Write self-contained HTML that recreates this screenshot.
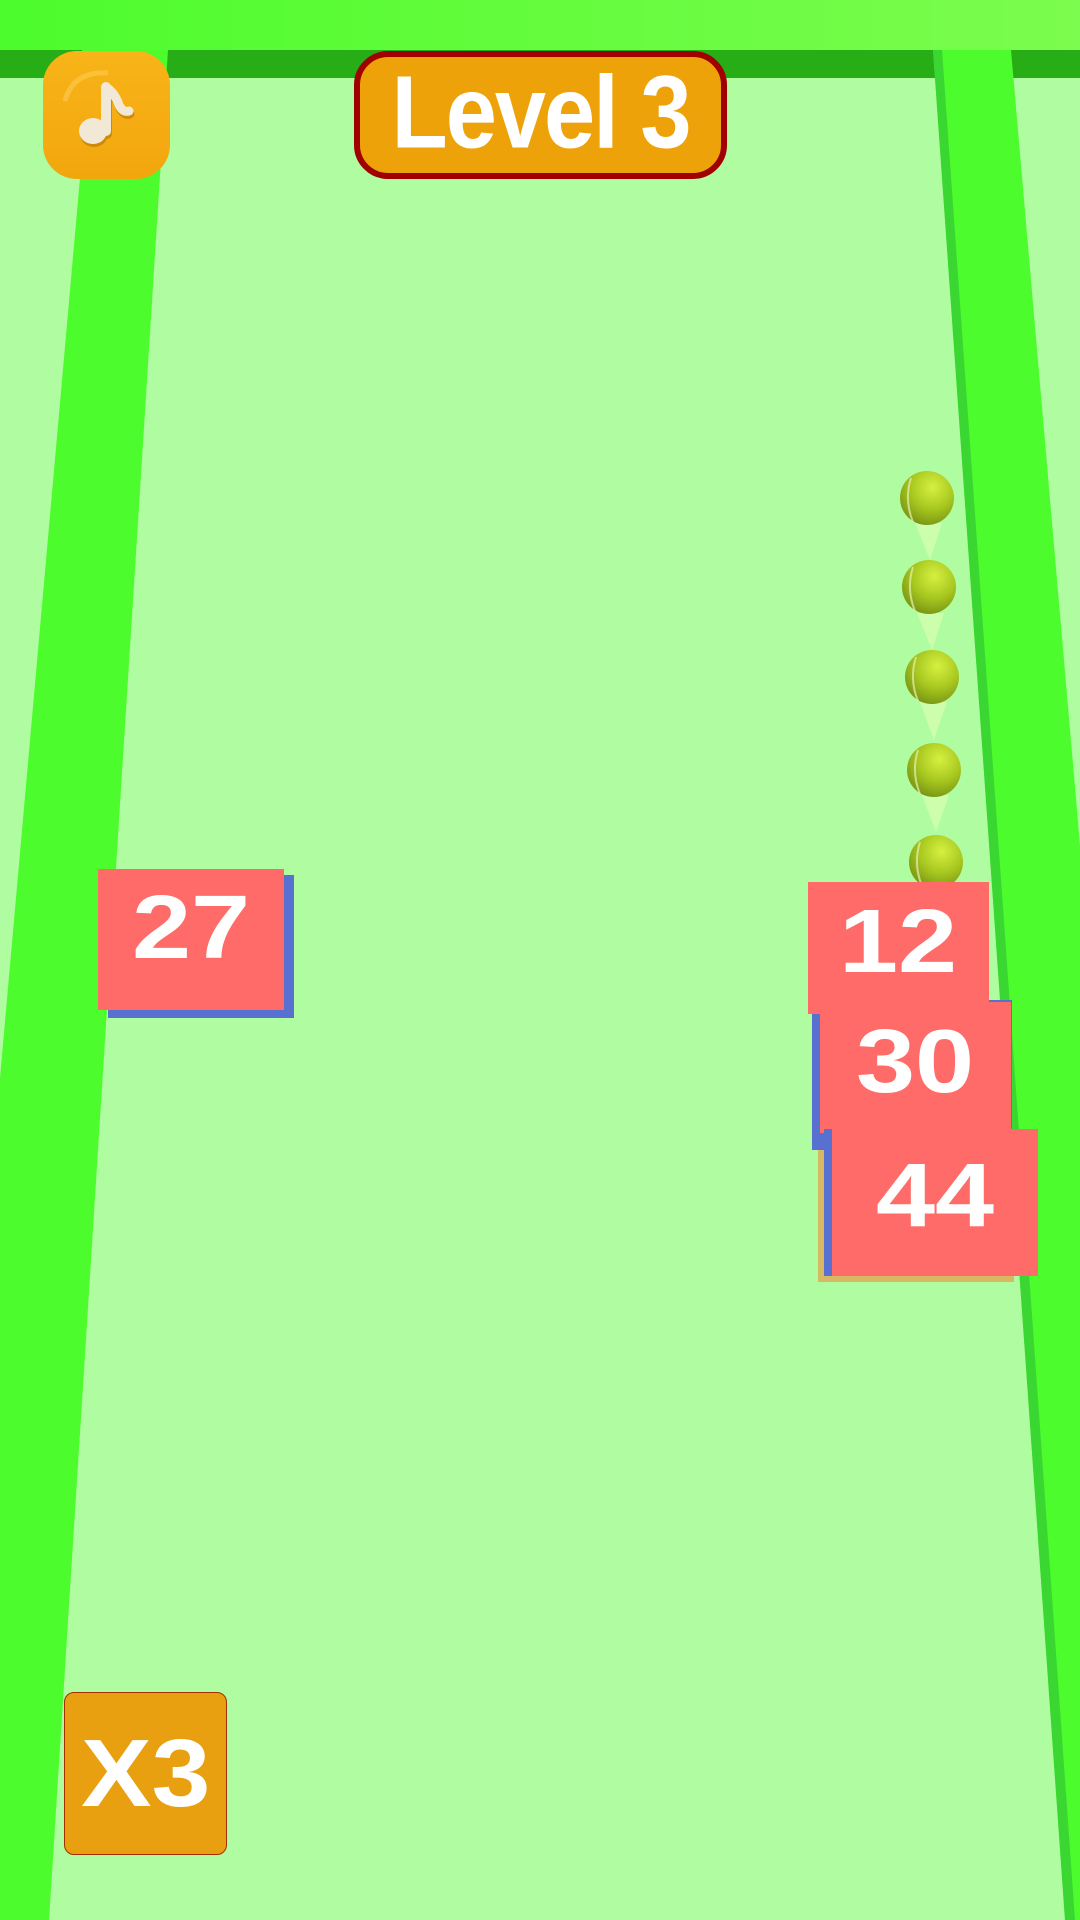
<!DOCTYPE html>
<html><head><meta charset="utf-8">
<style>
html,body{margin:0;padding:0;}
body{width:1080px;height:1920px;position:relative;overflow:hidden;background:#b0fca0;font-family:"Liberation Sans",sans-serif;font-weight:bold;}
.abs{position:absolute;}
.block{position:absolute;background:#ff6b68;color:#fff;font-weight:bold;text-align:center;}
.block span{display:inline-block;transform:scaleX(1.18);}
</style></head><body>
<svg class="abs" style="left:0;top:0" width="1080" height="1920" viewBox="0 0 1080 1920">
  <defs>
    <linearGradient id="top" x1="0" x2="1" y1="0" y2="0">
      <stop offset="0" stop-color="#4cfc2c"/><stop offset="1" stop-color="#7cfc4e"/>
    </linearGradient>
    <radialGradient id="ball" cx="0.6" cy="0.3" r="0.8">
      <stop offset="0" stop-color="#d6f040"/><stop offset="0.5" stop-color="#a8c820"/><stop offset="1" stop-color="#6e8a10"/>
    </radialGradient>
  </defs>
  <rect x="0" y="0" width="1080" height="50" fill="url(#top)"/>
  <rect x="0" y="50" width="1080" height="28" fill="#27ae16"/>
  <polygon points="82,50 168,50 49,1920 0,1920 0,1078 80,178" fill="#4cfc2c"/>
  <polygon points="933,50 1011,50 1080,845 1080,1920 1065,1920" fill="#4cfc2c"/>
  <polygon points="933,50 942,50 1075,1920 1065,1920" fill="#3ad632"/>
  <g fill="#d8ffb0" opacity="0.7">
    <polygon points="915,523 942,523 930,560"/>
    <polygon points="917,613 944,613 932,650"/>
    <polygon points="920,702 947,702 934,740"/>
    <polygon points="922,795 949,795 936,832"/>
  </g>
  <g fill="url(#ball)">
    <circle cx="927" cy="498" r="27"/>
    <circle cx="929" cy="587" r="27"/>
    <circle cx="932" cy="677" r="27"/>
    <circle cx="934" cy="770" r="27"/>
    <circle cx="936" cy="862" r="27"/>
  </g>
  <g fill="none" stroke="#e8f0b0" stroke-width="2" opacity="0.7">
    <path d="M911,478 Q904,500 913,522"/>
    <path d="M913,567 Q906,589 915,611"/>
    <path d="M916,657 Q909,679 918,701"/>
    <path d="M918,750 Q911,772 920,794"/>
    <path d="M920,842 Q913,864 922,886"/>
  </g>
</svg>

<div class="abs" style="left:108px;top:875px;width:186px;height:143px;background:#5870d0;"></div>
<div class="block" style="left:98px;top:869px;width:186px;height:141px;font-size:90px;line-height:118px;"><span>27</span></div>

<div class="abs" style="left:818px;top:1130px;width:196px;height:152px;background:#d8b860;"></div>
<div class="abs" style="left:812px;top:1000px;width:200px;height:150px;background:#5870d0;"></div>
<div class="block" style="left:808px;top:882px;width:181px;height:132px;font-size:90px;line-height:120px;"><span>12</span></div>
<div class="block" style="left:820px;top:1002px;width:191px;height:131px;font-size:90px;line-height:120px;"><span>30</span></div>
<div class="abs" style="left:824px;top:1129px;width:10px;height:147px;background:#5870d0;"></div>
<div class="block" style="left:832px;top:1129px;width:206px;height:147px;font-size:90px;line-height:135px;"><span>44</span></div>

<div class="abs" style="left:43px;top:51px;width:127px;height:128px;border-radius:34px;background:linear-gradient(#f8b418,#f2a60e);"></div>
<svg class="abs" style="left:43px;top:51px" width="127" height="128" viewBox="0 0 127 128">
  <path d="M22,50 Q30,20 65,22" stroke="#fcc848" stroke-width="5" fill="none" opacity="0.7"/>
  <g transform="translate(1,3)" opacity="0.35">
    <path d="M63,36 L63,80" stroke="#8a5000" stroke-width="10" stroke-linecap="round"/>
    <path d="M63,36 Q72,42 76,54 Q80,62 86,60" stroke="#8a5000" stroke-width="9" fill="none" stroke-linecap="round"/>
    <ellipse cx="50" cy="80" rx="14" ry="13" fill="#8a5000"/>
  </g>
  <path d="M63,36 L63,80" stroke="#f2e8d6" stroke-width="10" stroke-linecap="round"/>
  <path d="M63,36 Q72,42 76,54 Q80,62 86,60" stroke="#f2e8d6" stroke-width="9" fill="none" stroke-linecap="round"/>
  <ellipse cx="50" cy="80" rx="14" ry="13" fill="#f2e8d6"/>
</svg>

<div class="abs" style="left:354px;top:51px;width:361px;height:116px;border:6px solid #a00000;border-radius:34px;background:#eea20a;color:#fff;font-size:92px;line-height:112px;text-align:center;letter-spacing:-2px;"><span style="display:inline-block;transform:scaleY(1.12);">Level 3</span></div>

<div class="abs" style="left:64px;top:1692px;width:161px;height:161px;border:1.5px solid #a03000;border-radius:10px;background:#e8a010;color:#fff;font-size:96px;line-height:161px;text-align:center;"><span style="display:inline-block;transform:scaleX(1.1);">X3</span></div>
</body></html>
